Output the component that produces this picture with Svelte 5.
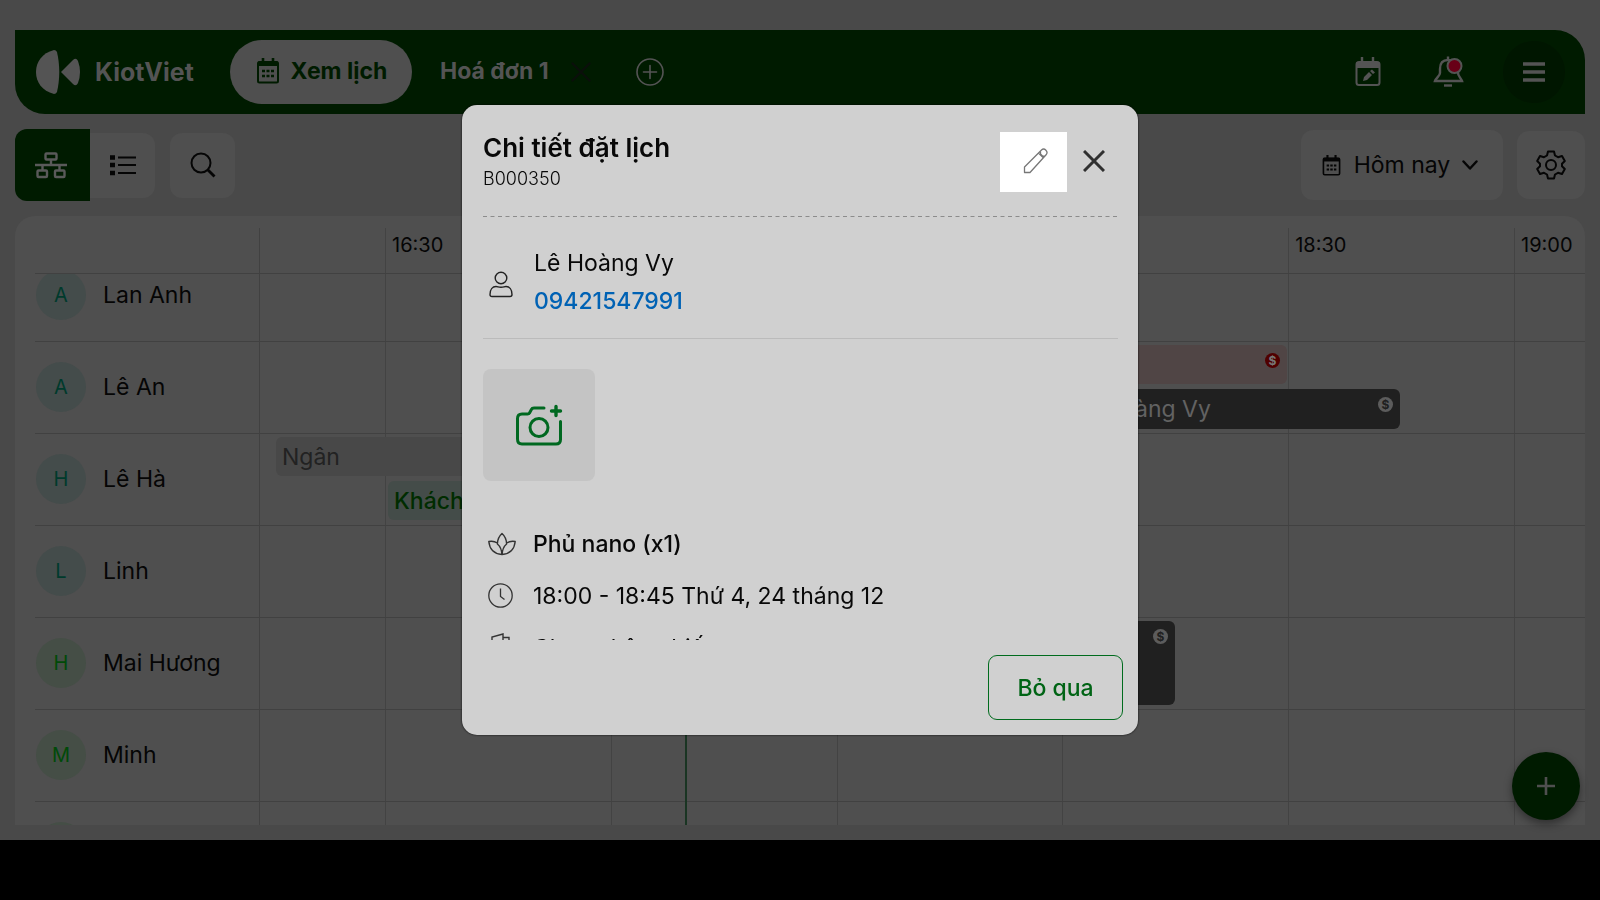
<script>
  const staff = [
    { initial: 'A', name: 'Lan Anh', tone: 'teal' },
    { initial: 'A', name: 'Lê An', tone: 'teal' },
    { initial: 'H', name: 'Lê Hà', tone: 'teal' },
    { initial: 'L', name: 'Linh', tone: 'teal' },
    { initial: 'H', name: 'Mai Hương', tone: 'green' },
    { initial: 'M', name: 'Minh', tone: 'green' },
    { initial: '', name: '', tone: 'green' }
  ];
  const times = ['', '16:30', '', '', '', '18:30', '19:00'];
  const bookings = [
    { label: '', kind: 'pink', left: 837, top: 95, width: 190, height: 39, paid: true },
    { label: 'Lê Hoàng Vy', kind: 'dark', left: 805, top: 139, width: 335, height: 40, paid: true },
    { label: 'Ngân', kind: 'grey', left: 16, top: 187, width: 222, height: 39 },
    { label: 'Khách lẻ', kind: 'mint', left: 128, top: 231, width: 222, height: 39 },
    { label: '', kind: 'dark', left: 577, top: 371, width: 338, height: 84, paid: true }
  ];
</script>

{#snippet calendar(size)}
  <svg width={size} height={size} viewBox="0 0 24 26" fill="none" stroke="currentColor" aria-hidden="true">
    <rect x="2" y="4" width="20" height="20.5" rx="1.5" stroke-width="2" />
    <path d="M2 3.500h20v4.500H2z" fill="currentColor" stroke="none" />
    <path d="M7 0v5M17 0v5" stroke-width="2.600" />
    <path d="M6 13h3m1.500 0h3m1.500 0h3M6 18h3m1.500 0h3m1.500 0h3" stroke-width="2.600" />
  </svg>
{/snippet}

<div class="app">
  <header>
    <a class="brand" href="#home">
      <svg width="46" height="46" viewBox="0 0 46 46" fill="currentColor" aria-hidden="true">
        <path d="M19 1C7 4 1 13 1 23s6 19 18 22q2 0 3-2c3-13 3-27 0-40q-1-2-3-2z" />
        <path d="M26 23 38 11q3-3 5 1 4 11 0 22-2 4-5 1L26 23z" />
      </svg>
      <span>KiotViet</span>
    </a>
    <button class="tab active">{@render calendar(26)}<span>Xem lịch</span></button>
    <button class="tab plain">Hoá đơn 1</button>
    <button class="icon close-tab" aria-label="Đóng">
      <svg width="20" height="20" viewBox="0 0 20 20" stroke="currentColor" stroke-width="2.200" stroke-linecap="round"><path d="M1.500 1.500l17 17M18.500 1.500l-17 17" /></svg>
    </button>
    <button class="icon add-tab" aria-label="Thêm">
      <svg width="28" height="28" viewBox="0 0 28 28" fill="none" stroke="currentColor" stroke-width="1.600" stroke-linecap="round"><circle cx="14" cy="14" r="13" /><path d="M14 7.500v13M7.500 14h13" /></svg>
    </button>
    <nav>
      <button class="icon" aria-label="Lịch hẹn">
        <svg width="28" height="30" viewBox="0 0 28 30" fill="none" stroke="currentColor">
          <rect x="2.500" y="5" width="23" height="23" rx="2.500" stroke-width="2" />
          <path d="M2 5.500h24v5.500H2z" fill="currentColor" stroke="none" /><path d="M8 0v6M19 0v6" stroke-width="2.400" />
          <path d="M9 24l1-4 5-5 3 3-5 5zM16 14l2-1.500 3 3-2 1.500z" fill="currentColor" stroke="none" />
        </svg>
      </button>
      <button class="icon" aria-label="Thông báo">
        <svg width="34" height="34" viewBox="0 0 34 34" fill="none" stroke="currentColor" stroke-width="2.400">
          <path d="M18 1.500v3M18 5c-6 0-8 4-8 9v4c0 3-4 5-5 8h27c-1-3-4-5-4-8v-4c0-5-4-9-10-9z" />
          <path d="M14 30.500h8" />
          <circle cx="24.500" cy="11" r="7" fill="#680017" stroke-width="2" />
        </svg>
      </button>
      <button class="menu" aria-label="Menu">
        <svg width="24" height="22" viewBox="0 0 24 22" stroke="currentColor" stroke-width="3.400"><path d="M1 3h22M1 11h22M1 19h22" /></svg>
      </button>
    </nav>
  </header>

  <div class="toolbar">
    <button class="view on" aria-label="Xem theo nhân viên">
      <svg width="32" height="28" viewBox="0 0 32 28" fill="none" stroke="currentColor" stroke-width="2.400">
        <rect x="10.500" y="2.500" width="11" height="6" rx="1" /><rect x="2.500" y="19.500" width="9.500" height="6.500" rx="1" /><rect x="20" y="19.500" width="9.500" height="6.500" rx="1" />
        <path d="M0 14h32M16 8v6M7.500 14v5M24.500 14v5" />
      </svg>
    </button>
    <button class="view list" aria-label="Xem danh sách">
      <svg width="26" height="22" viewBox="0 0 26 22" stroke="currentColor"><path d="M0 3.500h5M0 11h5M0 19h5" stroke-width="4.400" /><path d="M8 3.500h18M8 11h18M8 19h18" stroke-width="2.200" /></svg>
    </button>
    <button class="view search" aria-label="Tìm kiếm">
      <svg width="26" height="26" viewBox="0 0 26 26" fill="none" stroke="currentColor" stroke-width="2"><circle cx="11" cy="11" r="9.500" /><path d="M17.500 17.500l7 7" stroke-width="2.800" /></svg>
    </button>
    <button class="date">{@render calendar(21)}<span>Hôm nay</span>
      <svg width="16" height="10" viewBox="0 0 16 10" fill="none" stroke="currentColor" stroke-width="2.400" stroke-linecap="round" stroke-linejoin="round"><path d="M1.500 1.500 8 8.500l6.500-7" /></svg>
    </button>
    <button class="gear" aria-label="Thiết lập">
      <svg width="30" height="30" viewBox="0 0 30 30" fill="none" stroke="currentColor" stroke-width="2" stroke-linejoin="round">
        <path d="M12 1.500h6l1 4 3 1.700 4-1.200 2.800 5-2.800 2.800v2.400l2.800 2.800-2.800 5-4-1.200-3 1.700-1 4h-6l-1-4-3-1.700-4 1.200-2.800-5L4 16.200v-2.400L1.200 11 4 6l4 1.200 3-1.700z" /><circle cx="15" cy="15" r="5" />
      </svg>
    </button>
  </div>

  <main>
    <div class="times">
      <div class="corner"></div>
      {#each times as time}<div class="time">{time}</div>{/each}
    </div>
    <div class="scroll">
      <div class="rows">
        {#each staff as person}
          <div class="row">
            <div class="person"><span class="avatar {person.tone}">{person.initial}</span><span>{person.name}</span></div>
            {#each times as _}<div class="cell"></div>{/each}
          </div>
        {/each}
        <div class="canvas">
          <div class="now"></div>
          {#each bookings as b}
            <div class="booking {b.kind}" style="left:{b.left}px;top:{b.top}px;width:{b.width}px;height:{b.height}px">
              <span>{b.label}</span>{#if b.paid}<i>$</i>{/if}
            </div>
          {/each}
        </div>
      </div>
    </div>
  </main>

  <button class="fab" aria-label="Thêm lịch hẹn">
    <svg width="18" height="18" viewBox="0 0 18 18" stroke="currentColor" stroke-width="2.600"><path d="M9 0v18M0 9h18" /></svg>
  </button>
</div>

<div class="layer">
  <div class="modal" role="dialog" aria-labelledby="title">
    <div class="head">
      <div class="heading">
        <h1 id="title">Chi tiết đặt lịch</h1>
        <p>B000350</p>
      </div>
      <button class="edit" aria-label="Sửa">
        <svg width="26" height="26" viewBox="0 0 26 26" fill="none" stroke="currentColor" stroke-width="1.300" stroke-linejoin="round"><path d="M1.500 24.500v-5.500L18.500 2q2.200-2 4.400.2t.2 4.600L7 24.500zM15.500 5l5 5M17.500 3l0 3 2 2 3 .2" /></svg>
      </button>
      <button class="dismiss" aria-label="Đóng">
        <svg width="22" height="22" viewBox="0 0 22 22" stroke="currentColor" stroke-width="3"><path d="M1 1l20 20M21 1 1 21" /></svg>
      </button>
    </div>
    <div class="body">
      <svg class="dashes" height="1" aria-hidden="true"><line x1="0" y1="0.500" x2="100%" y2="0.500" stroke="#8c8c8c" stroke-dasharray="4 3.500" /></svg>
      <section class="customer">
        <svg width="24" height="27" viewBox="0 0 24 27" fill="none" stroke="currentColor" stroke-width="1.400"><circle cx="12" cy="7" r="5.800" /><path d="M3 25.500q-2 0-2-2c0-5 2.500-8 6-8 2 0 2 .8 5 .8s3-.8 5-.8c3.500 0 6 3 6 8q0 2-2 2z" /></svg>
        <div><p>Lê Hoàng Vy</p><a href="tel:09421547991">09421547991</a></div>
      </section>
      <button class="photo" aria-label="Thêm ảnh">
        <svg width="48" height="42" viewBox="0 0 48 42" fill="none" stroke="currentColor" stroke-width="3" stroke-linecap="round" stroke-linejoin="round"><path d="M29 4H19q-2 0-2.600 1.500L14.500 9q-.5 1-2 1H7q-4.500 0-4.500 4.500V35Q2.500 40 7 40h34q4.500 0 4.500-4.500V17.500" /><circle cx="24" cy="23.500" r="9" /><path d="M41 2.500v9M36.500 7h9" stroke-width="3.400" /></svg>
      </button>
      <div class="line service">
        <svg width="28" height="24" viewBox="0 0 28 24" fill="none" stroke="currentColor" stroke-width="1.400" stroke-linejoin="round"><path d="M14 22.500q-.5-7-4.600-10.500Q9.500 5.500 14 1.500q4.500 4 4.600 10.500Q14.500 15.500 14 22.500zM9.400 11Q5.500 8.500.8 9.500 2 21.500 14 22.500q12-1 13.200-13-4.700-1-8.600 1.500" /></svg>
        <span>Phủ nano (x1)</span>
      </div>
      <div class="line">
        <svg width="28" height="26" viewBox="0 0 28 26" fill="none" stroke="currentColor" stroke-width="1.300"><circle cx="12.500" cy="12.500" r="11.700" /><path d="M12.500 5.500v8l4 3" /></svg>
        <span>18:00 - 18:45 Thứ 4, 24 tháng 12</span>
      </div>
      <div class="line">
        <svg width="28" height="30" viewBox="0 0 28 30" fill="none" stroke="currentColor" stroke-width="1.400"><path d="M4 24V4l11-3v25zM15 4.500h6V24" /></svg>
        <span>Chưa nhận phiếu</span>
      </div>
    </div>
    <div class="foot"><button class="skip">Bỏ qua</button></div>
  </div>
</div>

<style>
  :global(body) { margin: 0; background: #000; font-family: Inter, "Noto Sans", sans-serif; }
  * { box-sizing: border-box; }
  button { border: 0; padding: 0; background: none; font: inherit; color: inherit; display: flex; align-items: center; justify-content: center; }
  svg { display: block; flex: none; }
  p, h1 { margin: 0; }
  a { text-decoration: none; color: inherit; }

  .app { height: calc(100vh - 60px); padding: 30px 15px 15px; background: #494949; display: flex; flex-direction: column; gap: 15px; position: relative; overflow: hidden; font-size: 23px; color: #050505; }
  header { height: 84px; flex: none; background: #001b00; border-radius: 0 30px 0 30px; display: flex; align-items: center; padding: 0 20px; color: #545454; }
  .brand { display: flex; align-items: center; gap: 14px; font-size: 25px; font-weight: 700; width: 160px; }
  .tab { font-size: 23px; font-weight: 700; white-space: nowrap; padding-bottom: 2px; }
  .active { width: 182px; height: 64px; border-radius: 32px; background: #4f4f4f; color: #001b00; gap: 10px; margin: 0 28px 0 35px; }
  .close-tab { color: #0b0f0b; margin-left: 22px; }
  .add-tab { margin-left: 45px; }
  nav { margin-left: auto; display: flex; align-items: center; gap: 48px; }
  .menu { width: 62px; height: 62px; border-radius: 50%; background: #001600; margin-left: -9px; }

  .toolbar { display: flex; align-items: center; height: 72px; flex: none; }
  .view { width: 65px; height: 65px; border-radius: 12px; background: #4f4f4f; }
  .on { width: 75px; height: 72px; border-radius: 12px 0 0 12px; background: #001b00; color: #5a5a5a; padding-right: 4px; }
  .list { border-radius: 0 12px 12px 0; margin-right: 15px; }
  .date { margin-left: auto; width: 202px; height: 70px; border-radius: 12px; background: #4f4f4f; gap: 12px; padding-right: 5px; }
  .gear { margin-left: 14px; width: 68px; height: 68px; border-radius: 12px; background: #4f4f4f; }

  main { flex: 1; min-height: 0; background: #4f4f4f; border-radius: 20px 20px 0 0; padding: 12px 0 0 20px; overflow: hidden; display: flex; flex-direction: column; }
  .times, .row { display: grid; grid-template-columns: 225px 125px repeat(5, minmax(0, 1fr)) 71px; }
  .times { height: 46px; flex: none; border-bottom: 1px solid #414141; font-size: 20px; }
  .corner, .person { border-right: 1px solid #414141; }
  .time { padding: 3px 0 0 6px; line-height: 28px; }
  .time + .time, .cell + .cell { border-left: 1px solid #434343; }
  .scroll { flex: 1; min-height: 0; overflow: hidden; display: flex; flex-direction: column; justify-content: flex-start; }
  .rows { margin-top: -24px; position: relative; flex: none; }
  .row { height: 92px; border-bottom: 1px solid #414141; }
  .person { display: flex; align-items: center; gap: 17px; padding: 0 0 1px 1px; white-space: nowrap; }
  .avatar { width: 50px; height: 50px; border-radius: 50%; display: grid; place-items: center; font-size: 20px; }
  .teal { background: #444c4b; color: #003a2c; }
  .green { background: #454e46; color: #004a08; }
  .canvas { position: absolute; inset: 0 0 0 225px; }
  .now { position: absolute; left: 425px; top: 0; bottom: 0; width: 2px; background: #1a3523; }
  .booking { position: absolute; border-radius: 6px; padding-left: 6px; display: flex; align-items: center; white-space: nowrap; overflow: hidden; }
  .pink { background: #504545; }
  .dark { background: #202020; color: #626262; }
  .grey { background: #484848; color: #222; }
  .mint { background: #444c49; color: #002c00; font-weight: 500; }
  i { position: absolute; right: 7px; top: 8px; width: 15px; height: 15px; border-radius: 50%; background: #5c5c5c; color: #202020; font: 700 12px/15px Inter, sans-serif; text-align: center; }
  .pink i { background: #500000; color: #777; }
  .fab { position: absolute; right: 20px; bottom: 20px; width: 68px; height: 68px; border-radius: 50%; background: #001b00; color: #4f4f4f; box-shadow: 0 4px 8px #0006; }

  .layer { position: fixed; inset: 0 0 60px; display: grid; place-items: center; }
  .modal { width: 676px; height: 630px; background: #d0d0d0; border-radius: 15px; display: flex; flex-direction: column; font-size: 23px; color: #080808; box-shadow: 0 0 2px #000; }
  .head { height: 111px; padding: 27px 20px 0 21px; display: flex; align-items: flex-start; flex: none; }
  .heading { flex: 1; }
  h1 { font-size: 26px; line-height: 32px; font-weight: 600; }
  .heading p { font-size: 18px; line-height: 30px; font-weight: 300; }
  .edit { width: 67px; height: 60px; background: #fff; color: #777; padding: 0 0 2px 5px; }
  .dismiss { width: 54px; height: 58px; color: #303030; margin-right: -3px; }
  .body { flex: 1; min-height: 0; overflow: hidden; padding: 0 20px 0 21px; }
  .dashes { width: 100%; }
  .customer { height: 122px; border-bottom: 1px solid #bbb; display: flex; align-items: center; gap: 21px; padding: 9px 0 0 6px; line-height: 38px; margin-bottom: 30px; }
  .customer > svg { margin-top: 4px; color: #222; }
  .customer a { display: block; color: #0062b4; font-weight: 500; }
  .photo { width: 112px; height: 112px; border-radius: 8px; background: #c4c4c4; color: #006820; margin-bottom: 37px; }
  .line { height: 52px; display: flex; align-items: center; gap: 17px; padding-left: 5px; }
  .line svg { color: #333; }
  .service { font-weight: 500; }
  .foot { height: 95px; padding: 15px; display: flex; justify-content: flex-end; flex: none; }
  .skip { width: 135px; height: 65px; border: 1px solid #006b1d; border-radius: 9px; color: #006415; font-weight: 500; }
</style>
